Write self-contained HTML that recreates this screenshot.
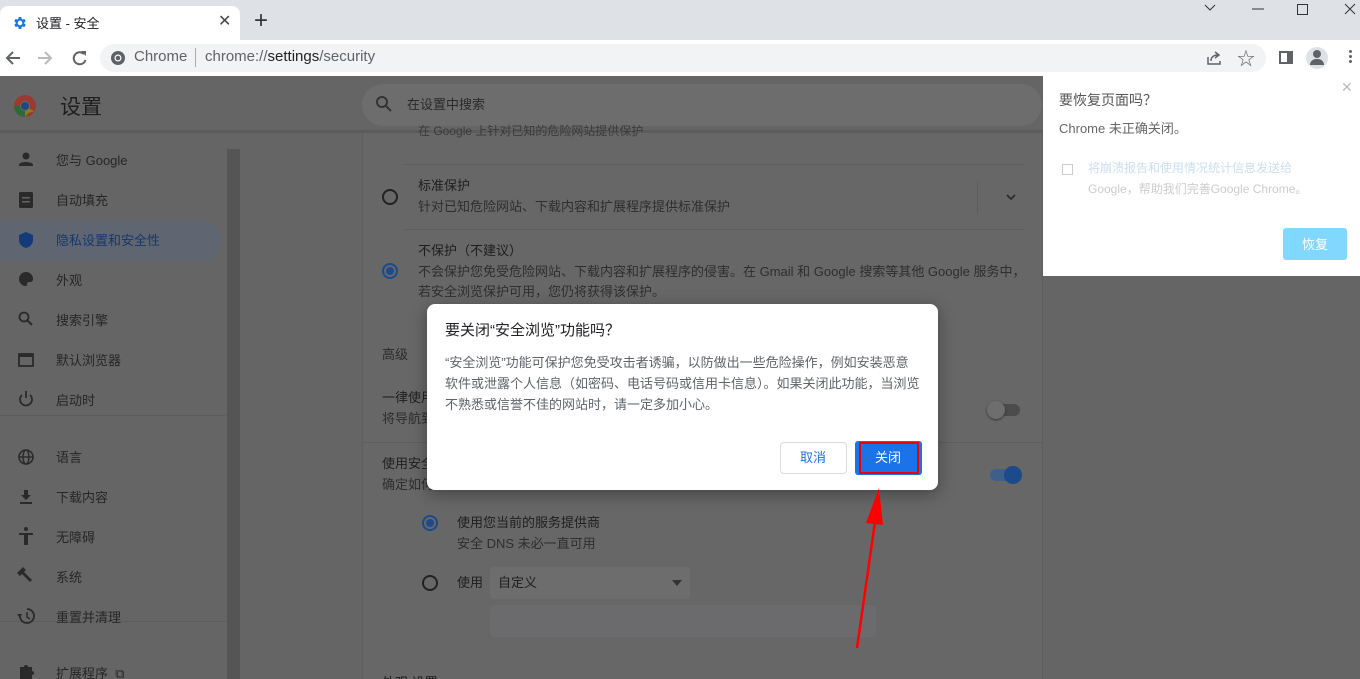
<!DOCTYPE html>
<html><head><meta charset="utf-8"><style>
*{margin:0;padding:0;box-sizing:border-box}
html,body{width:1360px;height:679px;overflow:hidden}
body{position:relative;font-family:"Liberation Sans","Noto Sans CJK SC",sans-serif;background:#656565;color:#202124}
.abs{position:absolute}
.t{position:absolute;white-space:nowrap;margin-top:-2px}
</style></head><body>
<div class="abs" style="left:0;top:0;width:1360px;height:40px;background:#dee1e6"></div>
<div class="abs" style="left:0;top:6px;width:240px;height:34px;background:#fff;border-radius:8px 8px 0 0"></div>
<svg class="abs" style="left:12px;top:15px" width="16" height="16" viewBox="0 0 24 24"><path fill="#1a73e8" d="M19.4 13a7.5 7.5 0 000-2l2.1-1.6-2-3.5-2.5 1a7 7 0 00-1.7-1L15 3h-4l-.4 2.9a7 7 0 00-1.7 1l-2.5-1-2 3.5L6.6 11a7.5 7.5 0 000 2l-2.1 1.6 2 3.5 2.5-1a7 7 0 001.7 1L11 21h4l.4-2.9a7 7 0 001.7-1l2.5 1 2-3.5zM13 15.5a3.5 3.5 0 110-7 3.5 3.5 0 010 7z" transform="translate(-1 0)"/></svg>
<div class="t" style="left:36px;top:15px;font-size:13px;color:#202124">设置 - 安全</div>
<div class="t" style="left:218px;top:13px;font-size:16px;color:#444">✕</div>
<div class="t" style="left:254px;top:9px;font-size:24px;color:#333;font-weight:300">+</div>
<svg class="abs" style="left:1200px;top:2px" width="160" height="14" viewBox="0 0 160 14"><path d="M5 3l5 5 5-5" stroke="#333" fill="none"/><path d="M52 7h12" stroke="#333"/><rect x="97.5" y="2.5" width="10" height="10" stroke="#333" fill="none"/><path d="M145 2l10 10M155 2l-10 10" stroke="#333"/></svg>
<div class="abs" style="left:0;top:40px;width:1360px;height:36px;background:#fff"></div>
<svg class="abs" style="left:4px;top:48px" width="90" height="20" viewBox="0 0 90 20"><path d="M16 10H4M9 4l-6 6 6 6" stroke="#5f6368" stroke-width="2" fill="none"/><path d="M34 10h12M41 4l6 6-6 6" stroke="#bbb" stroke-width="2" fill="none"/><path d="M80 6a6 6 0 10 1.5 6" stroke="#5f6368" stroke-width="2" fill="none"/><path d="M77 3h5v5z" fill="#5f6368"/></svg>
<div class="abs" style="left:100px;top:44px;width:1166px;height:28px;background:#f1f3f4;border-radius:14px"></div>
<svg class="abs" style="left:110px;top:50px" width="16" height="16" viewBox="0 0 16 16"><circle cx="8" cy="8" r="7" fill="#5f6368"/><circle cx="8" cy="8" r="3.5" fill="#fff"/><circle cx="8" cy="8" r="2.3" fill="#5f6368"/></svg>
<div class="t" style="left:134px;top:50px;font-size:15px;color:#5f6368">Chrome</div>
<div class="abs" style="left:195px;top:48px;width:1px;height:19px;background:#aaa"></div>
<div class="t" style="left:205px;top:50px;font-size:15px;color:#5f6368">chrome://<span style="color:#202124">settings</span>/security</div>
<svg class="abs" style="left:1205px;top:49px" width="18" height="18" viewBox="0 0 18 18"><path d="M3 8v7h12v-3" stroke="#5f6368" stroke-width="1.5" fill="none"/><path d="M6 12c0-4 3-6 7-6M10 3l4 3-4 3" stroke="#5f6368" stroke-width="1.5" fill="none"/></svg>
<div class="t" style="left:1237px;top:47px;font-size:18px;color:#5f6368">☆</div>
<div class="abs" style="left:1279px;top:51px;width:14px;height:13px;border:2px solid #5f6368;border-right-width:6px"></div>
<div class="abs" style="left:1306px;top:47px;width:22px;height:22px;border-radius:50%;background:#dee1e6"></div>
<div class="abs" style="left:1313px;top:50px;width:8px;height:8px;border-radius:50%;background:#5f6368"></div>
<div class="abs" style="left:1310px;top:59px;width:14px;height:6px;border-radius:6px 6px 0 0;background:#5f6368"></div>
<div class="abs" style="left:1349px;top:50px;width:3px;height:3px;background:#5f6368;box-shadow:0 5px #5f6368,0 10px #5f6368;border-radius:50%"></div>
<div class="abs" style="left:0;top:76px;width:1360px;height:603px;background:#656565"></div>
<svg class="abs" style="left:13px;top:94px" width="24" height="24" viewBox="0 0 24 24"><circle cx="12" cy="12" r="11" fill="#9b3a2f"/><path d="M12 12L2.5 17.5A11 11 0 0012 23z" fill="#2c6a3a"/><path d="M12 12l9.5 5.5A11 11 0 0012 23z" fill="#8f7b1f"/><path d="M12 12L2.5 17.5A11 11 0 011 12z" fill="#2c6a3a"/><circle cx="12" cy="12" r="5" fill="#6a6a6a"/><circle cx="12" cy="12" r="4" fill="#1f4a80"/></svg>
<div class="t" style="left:60px;top:93px;font-size:21px;color:#1e1e1e">设置</div>
<div class="abs" style="left:362px;top:84px;width:680px;height:42px;background:#6d6d6d;border-radius:21px"></div>
<svg class="abs" style="left:375px;top:95px" width="18" height="18" viewBox="0 0 18 18"><circle cx="7" cy="7" r="5" stroke="#333" stroke-width="2" fill="none"/><path d="M11 11l5 5" stroke="#333" stroke-width="2"/></svg>
<div class="t" style="left:407px;top:96px;font-size:13px;color:#2a2a2a">在设置中搜索</div>
<div class="abs" style="left:0;top:130px;width:1043px;height:3px;background:#5c5c5c"></div>
<div class="abs" style="left:0;top:221px;width:222px;height:40px;background:#606671;border-radius:0 20px 20px 0"></div>
<div class="abs" style="left:227px;top:149px;width:13px;height:530px;background:#555"></div>
<div class="abs" style="left:0;top:415px;width:226px;height:1px;background:#5c5c5c"></div>
<div class="abs" style="left:0;top:621px;width:226px;height:1px;background:#5c5c5c"></div>
<div style="font-size:13px;color:#262626">
<div class="t" style="left:56px;top:152px">您与 Google</div>
<div class="t" style="left:56px;top:192px">自动填充</div>
<div class="t" style="left:56px;top:232px;color:#15386a">隐私设置和安全性</div>
<div class="t" style="left:56px;top:272px">外观</div>
<div class="t" style="left:56px;top:312px">搜索引擎</div>
<div class="t" style="left:56px;top:352px">默认浏览器</div>
<div class="t" style="left:56px;top:392px">启动时</div>
<div class="t" style="left:56px;top:449px">语言</div>
<div class="t" style="left:56px;top:489px">下载内容</div>
<div class="t" style="left:56px;top:529px">无障碍</div>
<div class="t" style="left:56px;top:569px">系统</div>
<div class="t" style="left:56px;top:609px">重置并清理</div>
<div class="t" style="left:56px;top:665px">扩展程序 &nbsp;⧉</div>
</div>
<svg class="abs" style="left:16px;top:150px" width="20" height="530" viewBox="0 0 20 530" fill="#2a2a2a">
<circle cx="10" cy="6" r="3.5"/><path d="M3 15c0-4 14-4 14 0v1H3z"/>
<rect x="3" y="42" width="14" height="16" rx="1.5"/><rect x="6" y="47" width="8" height="1.5" fill="#666"/><rect x="6" y="51" width="8" height="1.5" fill="#666"/>
<path d="M10 82l7 3v5c0 4-3 7-7 8-4-1-7-4-7-8v-5z" fill="#123b78"/>
<path d="M10 122a7 7 0 100 14c1 0 1-1 1-2s1-2 2-2h2a3 3 0 002-3 7 7 0 00-7-7z"/>
<circle cx="8" cy="167" r="4.5" fill="none" stroke="#2a2a2a" stroke-width="1.8"/><path d="M11 170l5 5" stroke="#2a2a2a" stroke-width="2"/>
<rect x="3" y="204" width="14" height="12" fill="none" stroke="#2a2a2a" stroke-width="1.8"/><rect x="3" y="204" width="14" height="3"/>
<path d="M6 245a6 6 0 108 0M10 241v7" fill="none" stroke="#2a2a2a" stroke-width="1.8"/>
<circle cx="10" cy="307" r="7" fill="none" stroke="#2a2a2a" stroke-width="1.6"/><ellipse cx="10" cy="307" rx="3" ry="7" fill="none" stroke="#2a2a2a" stroke-width="1.4"/><path d="M3 307h14" stroke="#2a2a2a" stroke-width="1.4"/>
<path d="M8 340h4v5h3l-5 5-5-5h3zM4 352h12v2H4z"/>
<circle cx="10" cy="379" r="2"/><path d="M3 383h14v2h-5v10h-2v-5h-0v5H8v-10H3z"/>
<path d="M4 420l3-3 3 3-2 2 8 8-2 2-8-8-2 2-3-3z"/>
<path d="M11 459a7 7 0 11-7 7" fill="none" stroke="#2a2a2a" stroke-width="1.8"/><path d="M1 464h5l-2 4z"/><path d="M11 462v5l3 2" fill="none" stroke="#2a2a2a" stroke-width="1.5"/>
<path d="M4 517h4a2 2 0 014 0h4v4a2 2 0 010 4v5H4z"/>
</svg>
<div class="abs" style="left:362px;top:133px;width:681px;height:546px;background:#676767;border-left:1px solid #5e5e5e;border-right:1px solid #5e5e5e"></div>
<div class="t" style="left:418px;top:124px;font-size:12px;color:#3a3a3a">在 Google 上针对已知的危险网站提供保护</div>
<div class="abs" style="left:404px;top:164px;width:620px;height:1px;background:#5e5e5e"></div>
<div class="abs" style="left:404px;top:229px;width:620px;height:1px;background:#5e5e5e"></div>
<div class="abs" style="left:362px;top:442px;width:681px;height:1px;background:#5e5e5e"></div>
<div class="abs" style="left:977px;top:182px;width:1px;height:32px;background:#5e5e5e"></div>
<svg class="abs" style="left:1005px;top:192px" width="12" height="10"><path d="M2 3l4 4 4-4" stroke="#2a2a2a" stroke-width="1.6" fill="none"/></svg>
<div class="abs" style="left:382px;top:189px;width:16px;height:16px;border:2px solid #222;border-radius:50%"></div>
<div class="t" style="left:418px;top:177px;font-size:13px;color:#1e1e1e">标准保护</div>
<div class="t" style="left:418px;top:198px;font-size:13px;color:#2e2e2e">针对已知危险网站、下载内容和扩展程序提供标准保护</div>
<div class="abs" style="left:382px;top:263px;width:16px;height:16px;border:2px solid #1c4a8a;border-radius:50%"></div>
<div class="abs" style="left:386px;top:267px;width:8px;height:8px;background:#1c4a8a;border-radius:50%"></div>
<div class="t" style="left:418px;top:242px;font-size:13px;color:#1e1e1e">不保护（不建议）</div>
<div class="t" style="left:418px;top:263px;font-size:13px;color:#2e2e2e">不会保护您免受危险网站、下载内容和扩展程序的侵害。在 Gmail 和 Google 搜索等其他 Google 服务中，</div>
<div class="t" style="left:418px;top:283px;font-size:13px;color:#2e2e2e">若安全浏览保护可用，您仍将获得该保护。</div>
<div class="t" style="left:382px;top:346px;font-size:13px;color:#2a2a2a">高级</div>
<div class="t" style="left:382px;top:389px;font-size:13px;color:#1e1e1e">一律使用</div>
<div class="t" style="left:382px;top:410px;font-size:13px;color:#2e2e2e">将导航到</div>
<div class="abs" style="left:990px;top:404px;width:30px;height:12px;background:#4b4b4b;border-radius:6px"></div>
<div class="abs" style="left:987px;top:401px;width:18px;height:18px;background:#6e6e6e;border-radius:50%;box-shadow:0 1px 2px #333"></div>
<div class="t" style="left:382px;top:455px;font-size:13px;color:#1e1e1e">使用安全</div>
<div class="t" style="left:382px;top:476px;font-size:13px;color:#2e2e2e">确定如何</div>
<div class="abs" style="left:990px;top:469px;width:30px;height:12px;background:#3f5f8a;border-radius:6px"></div>
<div class="abs" style="left:1004px;top:466px;width:18px;height:18px;background:#1c4a8a;border-radius:50%"></div>
<div class="abs" style="left:422px;top:515px;width:16px;height:16px;border:2px solid #1c4a8a;border-radius:50%"></div>
<div class="abs" style="left:426px;top:519px;width:8px;height:8px;background:#1c4a8a;border-radius:50%"></div>
<div class="t" style="left:457px;top:514px;font-size:13px;color:#1e1e1e">使用您当前的服务提供商</div>
<div class="t" style="left:457px;top:535px;font-size:13px;color:#2e2e2e">安全 DNS 未必一直可用</div>
<div class="abs" style="left:422px;top:575px;width:16px;height:16px;border:2px solid #222;border-radius:50%"></div>
<div class="t" style="left:457px;top:574px;font-size:13px;color:#1e1e1e">使用</div>
<div class="abs" style="left:490px;top:567px;width:200px;height:32px;background:#6d6d6d;border-radius:4px"></div>
<div class="t" style="left:498px;top:574px;font-size:13px;color:#1e1e1e">自定义</div>
<div class="abs" style="left:672px;top:580px;border:5px solid transparent;border-top:6px solid #333"></div>
<div class="abs" style="left:490px;top:605px;width:386px;height:32px;background:#6b6b6d;border-radius:4px"></div>
<div class="t" style="left:382px;top:674px;font-size:13px;color:#1e1e1e">外观 设置</div>
<div class="abs" style="left:1043px;top:76px;width:317px;height:200px;background:#fff"></div>
<div class="t" style="left:1059px;top:92px;font-size:14px;color:#555">要恢复页面吗？</div>
<div class="t" style="left:1059px;top:120px;font-size:13px;color:#666">Chrome 未正确关闭。</div>
<div class="t" style="left:1341px;top:81px;font-size:14px;color:#bbb">✕</div>
<div class="abs" style="left:1062px;top:164px;width:11px;height:11px;border:1px solid #ccc"></div>
<div class="t" style="left:1088px;top:161px;font-size:12px;color:#cde">将崩溃报告和使用情况统计信息发送给</div>
<div class="t" style="left:1088px;top:182px;font-size:12px;color:#ccc">Google，帮助我们完善Google Chrome。</div>
<div class="abs" style="left:1283px;top:228px;width:64px;height:32px;background:#80d8ff;border-radius:3px"></div>
<div class="t" style="left:1302px;top:236px;font-size:13px;color:#fff">恢复</div>
<div class="abs" style="left:427px;top:304px;width:511px;height:186px;background:#fff;border-radius:8px;box-shadow:0 4px 16px rgba(0,0,0,.35)"></div>
<div class="t" style="left:445px;top:321px;font-size:15px;color:#202124">要关闭“安全浏览”功能吗？</div>
<div class="abs" style="left:445px;top:352px;width:475px;font-size:13px;line-height:21px;color:#5f6368">“安全浏览”功能可保护您免受攻击者诱骗，以防做出一些危险操作，例如安装恶意软件或泄露个人信息（如密码、电话号码或信用卡信息）。如果关闭此功能，当浏览不熟悉或信誉不佳的网站时，请一定多加小心。</div>
<div class="abs" style="left:780px;top:442px;width:67px;height:32px;border:1px solid #dadce0;border-radius:4px;background:#fff"></div>
<div class="t" style="left:800px;top:449px;font-size:13px;color:#1a73e8">取消</div>
<div class="abs" style="left:855px;top:441px;width:67px;height:34px;background:#1a73e8;border-radius:3px"></div>
<div class="abs" style="left:859px;top:442px;width:60px;height:32px;border:2px solid #e00"></div>
<div class="t" style="left:875px;top:449px;font-size:13px;color:#fff">关闭</div>
<svg class="abs" style="left:0;top:0" width="1360" height="679"><path d="M857 648L876 515" stroke="#f00" stroke-width="2.5"/><path d="M879 488L866 523L883 525z" fill="#f00"/></svg>
</body></html>
